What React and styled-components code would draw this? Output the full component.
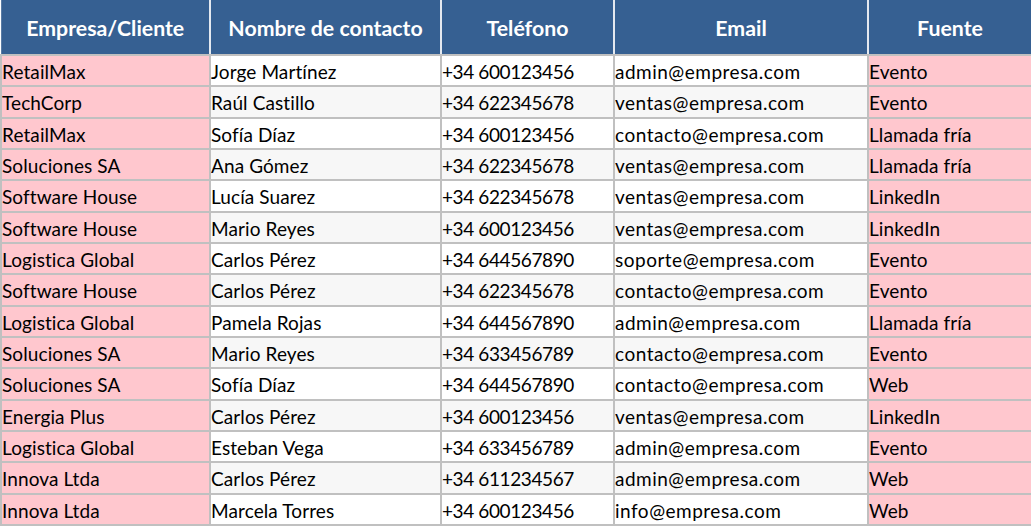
import React from 'react';
import styled, { createGlobalStyle } from 'styled-components';

const GlobalStyle = createGlobalStyle`
  html, body {
    margin: 0;
    padding: 0;
    background: #ffffff;
  }
`;

const Sheet = styled.table`
  width: 1031px;
  height: 526px;
  border-collapse: collapse;
  table-layout: fixed;
  font-family: Lato, 'Liberation Sans', sans-serif;
  color: #000;
`;

const HeadCell = styled.th`
  height: 53px;
  background: #366092;
  color: #fff;
  font-size: 21.3px;
  font-weight: 700;
  text-align: center;
  padding: 1px 0 0;
  border: 2px solid #e4e9f0;
  border-top: none;
  border-bottom: 2px solid #c0c0c0;

  &:first-child {
    border-left: 1px solid #5a7ba4;
  }

  &:last-child {
    border-right: 2px solid #c0c0c0;
  }
`;

const Cell = styled.td`
  background: ${({ $pink, $alt }) => ($pink ? '#ffc7ce' : $alt ? '#f7f7f7' : '#ffffff')};
  font-size: 19px;
  letter-spacing: ${({ $spacing }) => $spacing}px;
  padding: 2px 0 0 0;
  border: 2px solid #c0c0c0;
  white-space: nowrap;
  overflow: hidden;
  line-height: 1;
`;

const columns = [
  { title: 'Empresa/Cliente', width: 209, spacing: 0.1 },
  { title: 'Nombre de contacto', width: 231, spacing: 0.1 },
  { title: 'Teléfono', width: 173, spacing: -0.4 },
  { title: 'Email', width: 254, spacing: 0.5 },
  { title: 'Fuente', width: 164, spacing: 0.1 },
];

const rows = [
  ['RetailMax', 'Jorge Martínez', '+34 600123456', 'admin@empresa.com', 'Evento'],
  ['TechCorp', 'Raúl Castillo', '+34 622345678', 'ventas@empresa.com', 'Evento'],
  ['RetailMax', 'Sofía Díaz', '+34 600123456', 'contacto@empresa.com', 'Llamada fría'],
  ['Soluciones SA', 'Ana Gómez', '+34 622345678', 'ventas@empresa.com', 'Llamada fría'],
  ['Software House', 'Lucía Suarez', '+34 622345678', 'ventas@empresa.com', 'LinkedIn'],
  ['Software House', 'Mario Reyes', '+34 600123456', 'ventas@empresa.com', 'LinkedIn'],
  ['Logistica Global', 'Carlos Pérez', '+34 644567890', 'soporte@empresa.com', 'Evento'],
  ['Software House', 'Carlos Pérez', '+34 622345678', 'contacto@empresa.com', 'Evento'],
  ['Logistica Global', 'Pamela Rojas', '+34 644567890', 'admin@empresa.com', 'Llamada fría'],
  ['Soluciones SA', 'Mario Reyes', '+34 633456789', 'contacto@empresa.com', 'Evento'],
  ['Soluciones SA', 'Sofía Díaz', '+34 644567890', 'contacto@empresa.com', 'Web'],
  ['Energia Plus', 'Carlos Pérez', '+34 600123456', 'ventas@empresa.com', 'LinkedIn'],
  ['Logistica Global', 'Esteban Vega', '+34 633456789', 'admin@empresa.com', 'Evento'],
  ['Innova Ltda', 'Carlos Pérez', '+34 611234567', 'admin@empresa.com', 'Web'],
  ['Innova Ltda', 'Marcela Torres', '+34 600123456', 'info@empresa.com', 'Web'],
];

// first and last columns carry the conditional pink fill
const pinkCols = [0, 4];

const App = () => (
  <>
    <GlobalStyle />
    <Sheet>
      <colgroup>
        {columns.map((c) => (
          <col key={c.title} style={{ width: c.width }} />
        ))}
      </colgroup>
      <thead>
        <tr>
          {columns.map((c) => (
            <HeadCell key={c.title}>{c.title}</HeadCell>
          ))}
        </tr>
      </thead>
      <tbody>
        {rows.map((row, i) => (
          <tr key={i}>
            {row.map((value, j) => (
              <Cell
                key={j}
                $pink={pinkCols.includes(j)}
                $alt={i % 2 === 1}
                $spacing={columns[j].spacing}
              >
                {value}
              </Cell>
            ))}
          </tr>
        ))}
      </tbody>
    </Sheet>
  </>
);

export default App;
